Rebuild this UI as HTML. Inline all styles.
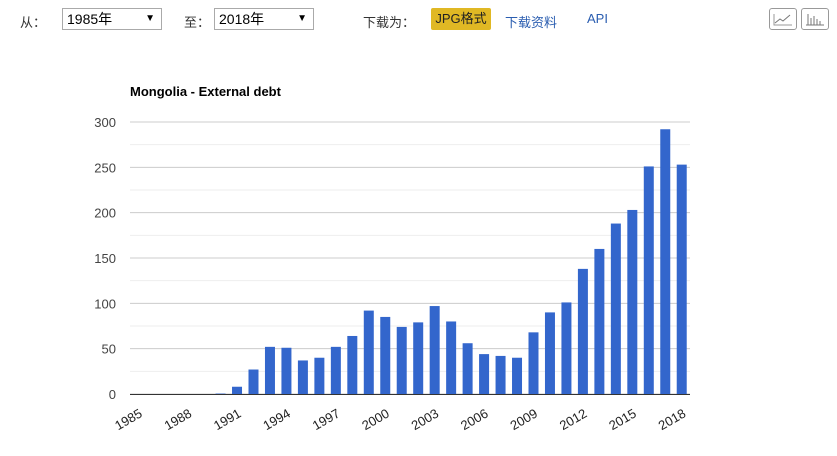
<!DOCTYPE html>
<html><head><meta charset="utf-8"><style>
body{margin:0;width:837px;height:456px;background:#fff;font-family:"Liberation Sans","Noto Sans CJK SC",sans-serif;font-size:13px;color:#333;position:relative;overflow:hidden}
.a{position:absolute}
.sel{position:absolute;top:8px;height:22px;border:1px solid #aaa;box-sizing:border-box;font-size:14px;line-height:20px;padding-left:4px;color:#000;background:#fff}
.sel span{position:absolute;right:6px;top:0;font-size:10px}
.ib{position:absolute;top:8px;width:28px;height:22px;border:1px solid #999;border-radius:3px;box-sizing:border-box;background:#fff}
</style></head><body>
<div class="a" style="left:20px;top:12px">从：</div>
<div class="sel" style="left:62px;width:100px">1985年<span>▼</span></div>
<div class="a" style="left:184px;top:12px">至：</div>
<div class="sel" style="left:214px;width:100px">2018年<span>▼</span></div>
<div class="a" style="left:363px;top:12px">下载为：</div>
<div class="a" style="left:431px;top:8px;width:60px;height:22px;background:#e0b824;border-radius:2px;line-height:22px;text-align:center;color:#222">JPG格式</div>
<div class="a" style="left:505px;top:12px;color:#2a5db0">下载资料</div>
<div class="a" style="left:587px;top:11px;color:#2a5db0">API</div>
<div class="ib" style="left:769px"><svg width="26" height="20"><polyline points="5,14 10,10 13,12 20,6" fill="none" stroke="#777" stroke-width="1"/><polyline points="4,5 4,16 22,16" fill="none" stroke="#999"/></svg></div>
<div class="ib" style="left:801px"><svg width="26" height="20"><g stroke="#777" stroke-width="1"><line x1="6" y1="16" x2="6" y2="5"/><line x1="9" y1="16" x2="9" y2="9"/><line x1="12" y1="16" x2="12" y2="7"/><line x1="15" y1="16" x2="15" y2="10"/><line x1="18" y1="16" x2="18" y2="12"/><line x1="4" y1="16" x2="22" y2="16"/></g></svg></div>
<div class="a" style="left:130px;top:84px;font-weight:bold;font-size:13px;color:#000">Mongolia - External debt</div>
<svg class="a" style="left:0;top:0" width="837" height="456" id="c"></svg>
<script>
var v=[0,0,0,0,0,0.5,8,27,52,51,37,40,52,64,92,85,74,79,97,80,56,44,42,40,68,90,101,138,160,188,203,251,292,253];
var s='',x0=130,w=(690-130)/34,y0=394,k=272/300;
for(var g=0;g<=300;g+=25){var y=y0-g*k;s+='<line x1="130" x2="690" y1="'+y+'" y2="'+y+'" stroke="'+(g%50?'#eee':'#ccc')+'"/>';if(g%50==0)s+='<text x="116" y="'+(y+5)+'" text-anchor="end" font-size="13" fill="#444" font-family="Liberation Sans">'+g+'</text>';}
v.forEach(function(d,i){var h=d*k,x=x0+i*w+3.2;s+='<rect x="'+x+'" y="'+(y0-h)+'" width="10" height="'+h+'" fill="#3366cc"/>';if(i%3==0){var cx=x+10;s+='<text transform="translate('+cx+',416) rotate(-30)" text-anchor="end" font-size="13" fill="#222" font-family="Liberation Sans">'+(1985+i)+'</text>';}});
s+='<line x1="130" x2="690" y1="394.5" y2="394.5" stroke="#333"/>';
document.getElementById('c').innerHTML=s;
</script>
</body></html>
